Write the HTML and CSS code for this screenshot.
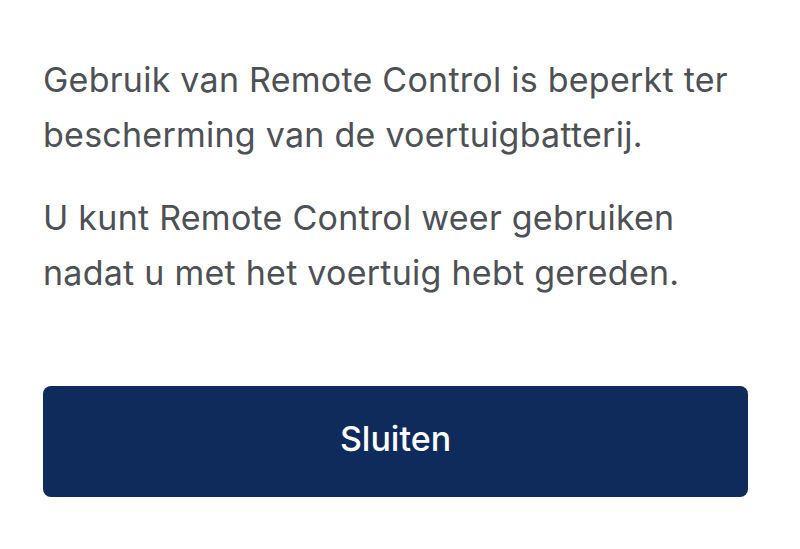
FILE: index.html
```html
<!DOCTYPE html>
<html>
<head>
<meta charset="utf-8">
<link rel="stylesheet" href="styles.css">
</head>
<body>
<div class="sheet">
  <p class="msg">Gebruik van Remote Control is beperkt ter bescherming van de voertuigbatterij.</p>
  <p class="msg">U kunt Remote Control weer gebruiken nadat u met het voertuig hebt gereden.</p>
  <button class="btn">Sluiten</button>
</div>
</body>
</html>
```
FILE: styles.css
```css
html, body { margin: 0; padding: 0; background: #fff; }
.sheet {
  width: 800px;
  height: 549px;
  box-sizing: border-box;
  padding: 52px 52px 0 43px;
  display: flex;
  flex-direction: column;
  font-family: Inter, "Noto Sans", sans-serif;
}
.msg {
  margin: 0 0 28px 0;
  font-size: 34px;
  line-height: 55px;
  letter-spacing: 0.25px;
  color: #4d5055;
}
.btn {
  margin-top: 58px;
  width: 705px;
  height: 111px;
  padding: 0 0 7px 0;
  border: none;
  border-radius: 8px;
  background: #0f2b5b;
  color: #fff;
  font-family: Inter, "Noto Sans", sans-serif;
  font-size: 34px;
  font-weight: 500;
}
```
